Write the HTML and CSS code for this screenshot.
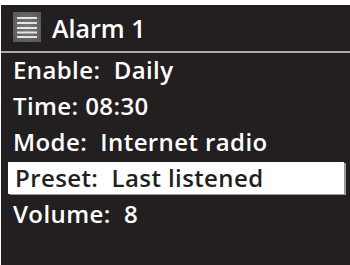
FILE: index.html
```html
<!DOCTYPE html>
<html>
<head>
<meta charset="utf-8">
<link rel="stylesheet" href="styles.css">
</head>
<body>
<div class="screen">
  <div class="header">
    <svg class="icon" width="28" height="30" viewBox="0 0 28 30">
      <defs>
        <radialGradient id="g" cx="50%" cy="50%" r="60%">
          <stop offset="0" stop-color="#7a7a7a"/>
          <stop offset="1" stop-color="#5a5a5a"/>
        </radialGradient>
      </defs>
      <rect x="0" y="0" width="28" height="30" fill="url(#g)"/>
      <g stroke="#e4e4e4" stroke-width="2">
        <line x1="4" y1="6" x2="24" y2="6"/>
        <line x1="4" y1="11" x2="24" y2="11"/>
        <line x1="4" y1="16" x2="24" y2="16"/>
        <line x1="4" y1="20.5" x2="24" y2="20.5"/>
        <line x1="4" y1="25" x2="24" y2="25"/>
      </g>
    </svg>
    <span class="title">Alarm 1</span>
  </div>
  <div class="list">
    <div class="row">Enable:&nbsp; Daily</div>
    <div class="row">Time: 08:30</div>
    <div class="row">Mode:&nbsp; Internet radio</div>
    <div class="row selected">Preset:&nbsp; Last listened</div>
    <div class="row">Volume:&nbsp; 8</div>
  </div>
</div>
</body>
</html>
```
FILE: styles.css
```css
html, body {
  margin: 0;
  padding: 0;
  background: #ffffff;
}
body {
  width: 350px;
  height: 265px;
  overflow: hidden;
}
.screen {
  margin: 5px 0 0 1px;
  height: 260px;
  background: #231f20;
  font-family: "Open Sans", "Liberation Sans", sans-serif;
  font-weight: 600;
  color: #ffffff;
}
.header {
  display: flex;
  align-items: center;
  padding-left: 12px;
  border-bottom: 2px solid #a9a9a9;
  box-sizing: border-box;
  height: 48px;
}
.icon {
  display: block;
  margin-top: -2px;
}
.title {
  font-size: 25px;
  margin-left: 11px;
  line-height: 30px;
  margin-top: -1px;
}
.list {
  padding-top: 1px;
}
.row {
  height: 32px;
  line-height: 32px;
  margin: 0 6px 4px 7px;
  padding-left: 5px;
  font-size: 24px;
  letter-spacing: 0.4px;
  white-space: nowrap;
}
.row.selected {
  background: #ffffff;
  color: #231f20;
  padding-left: 7px;
  box-shadow: 2px 1px 0 #9a9a9a;
}
```
